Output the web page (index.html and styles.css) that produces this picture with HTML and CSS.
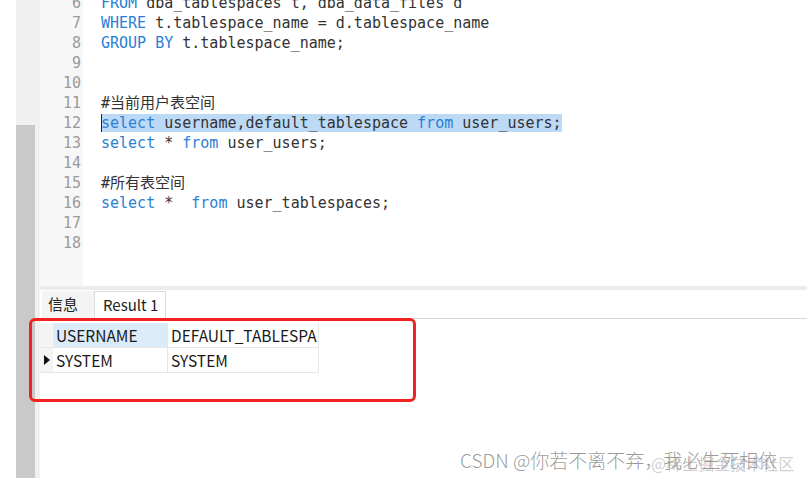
FILE: index.html
```html
<!DOCTYPE html>
<html lang="zh">
<head>
    <meta charset="UTF-8">
    <title>SQL Editor</title>
    <link rel="stylesheet" href="styles.css">
</head>
<body>
    <div class="app">
        <div class="vscroll"><div class="thumb"></div></div>
        <div class="edge"></div>
        <div class="main">
            <div class="editor">
                <div class="gutter">
                    <div class="ln">6</div>
                    <div class="ln">7</div>
                    <div class="ln">8</div>
                    <div class="ln">9</div>
                    <div class="ln">10</div>
                    <div class="ln">11</div>
                    <div class="ln">12</div>
                    <div class="ln">13</div>
                    <div class="ln">14</div>
                    <div class="ln">15</div>
                    <div class="ln">16</div>
                    <div class="ln">17</div>
                    <div class="ln">18</div>
                </div>
                <div class="code">
                    <div class="line"><span class="kw">FROM</span> dba_tablespaces t, dba_data_files d</div>
                    <div class="line"><span class="kw">WHERE</span> t.tablespace_name = d.tablespace_name</div>
                    <div class="line"><span class="kw">GROUP BY</span> t.tablespace_name;</div>
                    <div class="line"></div>
                    <div class="line"></div>
                    <div class="line"><span class="cjk">#当前用户表空间</span></div>
                    <div class="line"><span class="sel"><span class="kw">select</span> username,default_tablespace <span class="kw">from</span> user_users;</span></div>
                    <div class="line"><span class="kw">select</span> * <span class="kw">from</span> user_users;</div>
                    <div class="line"></div>
                    <div class="line"><span class="cjk">#所有表空间</span></div>
                    <div class="line"><span class="kw">select</span> *  <span class="kw">from</span> user_tablespaces;</div>
                    <div class="line"></div>
                    <div class="line"></div>
                </div>
            </div>
            <div class="split"></div>
            <div class="tabs">
                <div class="tab">信息</div>
                <div class="tab active">Result 1</div>
            </div>
            <div class="grid">
                <div class="row">
                    <div class="marker"></div>
                    <div class="cell c1 head">USERNAME</div>
                    <div class="cell c2">DEFAULT_TABLESPA</div>
                </div>
                <div class="row">
                    <div class="marker"><span class="arrow"></span></div>
                    <div class="cell c1">SYSTEM</div>
                    <div class="cell c2">SYSTEM</div>
                </div>
            </div>
        </div>
    </div>
    <div class="callout"></div>
    <div class="mark">CSDN @你若不离不弃，我必生死相依</div>
    <div class="mark2">@稀土掘金技术社区</div>
</body>
</html>
```

FILE: styles.css
```css
body {
    margin: 0;
    padding: 0;
    background: #fff;
    width: 807px;
    height: 478px;
    overflow: hidden;
    position: relative;
    font-family: "Noto Sans CJK SC", sans-serif;
}
.app {
    display: flex;
    height: 478px;
    margin-left: 16px;
}
.vscroll {
    width: 19px;
    background: #f0f0f0;
    padding-top: 125px;
    display: flex;
    flex-direction: column;
    box-sizing: border-box;
}
.thumb {
    flex: 1;
    background: #c9c9c9;
}
.edge {
    width: 5px;
    background: #f0f0f0;
}
.main {
    flex: 1;
    display: flex;
    flex-direction: column;
}
.editor {
    height: 286px;
    display: flex;
    overflow: hidden;
    font-family: "DejaVu Sans Mono", monospace;
    font-size: 15px;
}
.gutter {
    width: 43px;
    background: #f7f7f7;
    text-align: right;
    padding-right: 2px;
    box-sizing: border-box;
    color: #9a9a9a;
    padding-top: 1px;
    margin-top: -8px;
}
.ln, .line {
    height: 20px;
    line-height: 20px;
    white-space: pre;
}
.code {
    flex: 1;
    padding-left: 18px;
    padding-top: 1px;
    margin-top: -8px;
    color: #333;
}
.kw {
    color: #2a7fd4;
}
.cjk {
    font-family: "DejaVu Sans Mono", "Noto Sans CJK SC", monospace;
}
.sel {
    background: #bcd9f6;
    display: inline-block;
    height: 18px;
    line-height: 18px;
    box-shadow: inset 1px 0 0 #222;
}
.split {
    height: 4px;
    background: #ececec;
}
.tabs {
    height: 28px;
    display: flex;
    align-items: flex-end;
    padding-left: 2px;
    border-bottom: 1px solid #d6d6d6;
    font-size: 15px;
    color: #222;
}
.tab {
    width: 52px;
    height: 27px;
    line-height: 26px;
    padding-left: 6px;
    box-sizing: border-box;
    background: #f4f4f4;
}
.tab.active {
    width: 72px;
    padding-left: 8px;
    background: #fff;
    border: 1px solid #dcdcdc;
    border-bottom: none;
    margin-bottom: -1px;
    height: 28px;
}
.grid {
    padding-top: 4px;
    font-size: 15.5px;
    color: #1a1a1a;
}
.row {
    display: flex;
    height: 25px;
}
.marker {
    width: 13px;
    background: #f4f4f4;
    border-bottom: 1px solid #e8e8e8;
    box-sizing: border-box;
    display: flex;
    align-items: center;
    justify-content: center;
}
.arrow {
    width: 0;
    height: 0;
    border-top: 5px solid transparent;
    border-bottom: 5px solid transparent;
    border-left: 6px solid #111;
}
.cell {
    line-height: 25px;
    padding-left: 3px;
    box-sizing: border-box;
    border-right: 1px solid #e6e6e6;
    border-bottom: 1px solid #e6e6e6;
    white-space: nowrap;
    overflow: hidden;
}
.c1 {
    width: 115px;
}
.c2 {
    width: 151px;
}
.head {
    background: #dcebf8;
}
.callout {
    position: absolute;
    left: 29px;
    top: 318px;
    width: 387px;
    height: 84px;
    border: 3px solid #f1231f;
    border-radius: 6px;
    box-sizing: border-box;
}
.mark {
    position: absolute;
    left: 460px;
    top: 446px;
    font-size: 19px;
    font-weight: 300;
    color: rgba(120, 120, 120, 0.75);
    white-space: nowrap;
}
.mark2 {
    position: absolute;
    left: 651px;
    top: 451px;
    font-size: 16px;
    color: rgba(160, 160, 160, 0.5);
    white-space: nowrap;
}
```
